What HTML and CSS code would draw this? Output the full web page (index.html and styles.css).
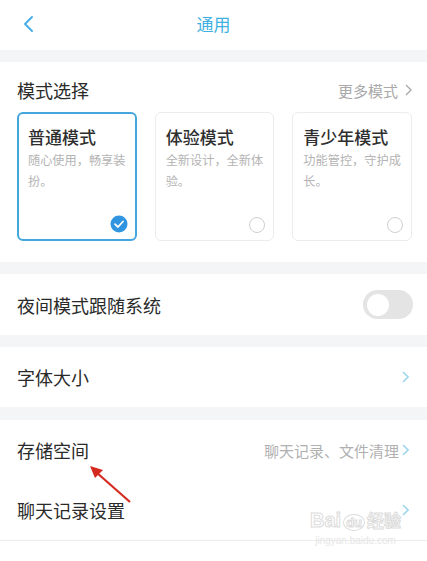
FILE: index.html
```html
<!DOCTYPE html>
<html lang="zh-CN">
<head>
    <meta charset="UTF-8">
    <meta name="viewport" content="width=device-width, initial-scale=1.0">
    <title>通用</title>
    <link rel="stylesheet" href="styles.css">
</head>
<body>

<div class="page">
    <div class="topbar">
        <svg class="back" width="12" height="18" viewBox="0 0 12 18">
            <path d="M10 2 L3 9 L10 16" fill="none" stroke="#4aaee6" stroke-width="2" stroke-linecap="round" stroke-linejoin="round"/>
        </svg>
        <div class="title">通用</div>
    </div>

    <div class="gap"></div>

    <div class="section modes">
        <div class="modes-head">
            <span class="label">模式选择</span>
            <span class="more">更多模式
                <svg width="8" height="12" viewBox="0 0 8 12"><path d="M2 1 L7 6 L2 11" fill="none" stroke="#aaa" stroke-width="1.4"/></svg>
            </span>
        </div>
        <div class="cards">
            <div class="card active">
                <div class="card-title">普通模式</div>
                <div class="card-desc">随心使用，畅享装扮。</div>
                <svg class="mark" width="18" height="18" viewBox="0 0 18 18">
                    <circle cx="9" cy="9" r="8.5" fill="#2f95e0"/>
                    <path d="M5 9.2 L8 12 L13 6.5" fill="none" stroke="#fff" stroke-width="1.8" stroke-linecap="round" stroke-linejoin="round"/>
                </svg>
            </div>
            <div class="card">
                <div class="card-title">体验模式</div>
                <div class="card-desc">全新设计，全新体验。</div>
                <span class="mark ring"></span>
            </div>
            <div class="card">
                <div class="card-title">青少年模式</div>
                <div class="card-desc">功能管控，守护成长。</div>
                <span class="mark ring"></span>
            </div>
        </div>
    </div>

    <div class="gap"></div>

    <div class="section">
        <div class="row">
            <span class="label">夜间模式跟随系统</span>
            <span class="switch"><span class="knob"></span></span>
        </div>
    </div>

    <div class="gap"></div>

    <div class="section">
        <div class="row short">
            <span class="label">字体大小</span>
            <svg class="arrow" width="8" height="12" viewBox="0 0 8 12"><path d="M2 1 L7 6 L2 11" fill="none" stroke="#9fd6ee" stroke-width="1.6"/></svg>
        </div>
    </div>

    <div class="gap wide"></div>

    <div class="section last">
        <div class="row short">
            <span class="label">存储空间</span>
            <span class="hint">聊天记录、文件清理
                <svg width="8" height="12" viewBox="0 0 8 12"><path d="M2 1 L7 6 L2 11" fill="none" stroke="#9fd6ee" stroke-width="1.6"/></svg>
            </span>
        </div>
        <div class="row short">
            <span class="label">聊天记录设置</span>
            <svg class="arrow" width="8" height="12" viewBox="0 0 8 12"><path d="M2 1 L7 6 L2 11" fill="none" stroke="#9fd6ee" stroke-width="1.6"/></svg>
        </div>
    </div>

    <!-- annotation arrow drawn over the screenshot -->
    <svg class="pointer" width="50" height="45" viewBox="0 0 50 45">
        <path d="M44 40 L10 10" stroke="#d42a20" stroke-width="2.2" fill="none"/>
        <path d="M4 4 L17 8 L9 16 Z" fill="#d42a20"/>
    </svg>

    <div class="watermark">
        <div class="wm-top"><span class="wm-bai">Bai</span><span class="wm-du">du</span><span class="wm-jy">经验</span></div>
        <div class="wm-url">jingyan.baidu.com</div>
    </div>
</div>

</body>
</html>
```

FILE: styles.css
```css
body {
    margin: 0;
    background: #fff;
    font-family: "Noto Sans CJK SC", "Noto Sans", sans-serif;
    color: #2e2e2e;
}
.page {
    position: relative;
    width: 427px;
    height: 561px;
    overflow: hidden;
    background: #fff;
}
.topbar {
    height: 50px;
    display: flex;
    align-items: center;
    justify-content: center;
    position: relative;
}
.back {
    position: absolute;
    left: 22px;
    top: 15px;
}
.title {
    font-size: 17px;
    color: #3eb0e2;
    margin-top: -4px;
}
.gap {
    height: 12px;
    background: #f4f5f7;
}
.gap.wide {
    height: 13px;
}
.section {
    background: #fff;
}
.modes {
    padding: 0 15px 21px 17px;
}
.modes-head {
    height: 44px;
    padding-top: 6px;
    display: flex;
    align-items: center;
    justify-content: space-between;
}
.label {
    font-size: 18px;
    color: #2a2a2a;
}
.more {
    font-size: 15px;
    color: #a9a9a9;
    display: flex;
    align-items: center;
    gap: 6px;
}
.cards {
    display: flex;
    gap: 18px;
}
.card {
    position: relative;
    width: 120px;
    height: 129px;
    box-sizing: border-box;
    border: 1px solid #ececec;
    border-radius: 6px;
    padding: 11px 10px 0 10px;
}
.card.active {
    border: 2px solid #45a6de;
    padding: 10px 9px 0 9px;
}
.card-title {
    font-size: 17px;
    line-height: 26px;
    font-weight: 500;
    color: #2e2e2e;
}
.card-desc {
    font-size: 12.2px;
    line-height: 21px;
    color: #b4b4b4;
}
.mark {
    position: absolute;
    right: 8px;
    bottom: 7px;
}
.card.active .mark {
    right: 7px;
    bottom: 6px;
}
.ring {
    width: 14px;
    height: 14px;
    border: 1.5px solid #cfcfcf;
    border-radius: 50%;
}
.row {
    height: 61px;
    display: flex;
    align-items: center;
    justify-content: space-between;
    padding: 0 18px 0 17px;
}
.row.short {
    height: 60px;
}
.section.last {
    border-bottom: 1px solid #ececec;
}
.switch {
    width: 50px;
    height: 29px;
    border-radius: 15px;
    background: #e4e4e4;
    display: flex;
    align-items: center;
    padding-left: 4px;
    box-sizing: border-box;
    margin-right: -4px;
}
.knob {
    width: 22px;
    height: 22px;
    border-radius: 50%;
    background: #fff;
}
.hint {
    font-size: 15px;
    color: #b0b0b0;
    display: flex;
    align-items: center;
    gap: 2px;
}
.pointer {
    position: absolute;
    left: 86px;
    top: 462px;
}
.watermark {
    position: absolute;
    left: 310px;
    top: 510px;
    color: #e2e2e2;
    text-align: center;
}
.wm-top {
    font-family: "Liberation Sans", sans-serif;
    font-size: 20px;
    line-height: 20px;
    font-weight: bold;
    color: #fff;
    -webkit-text-stroke: 1px #dcdcdc;
}
.wm-du {
    font-size: 13px;
    border: 1px solid #dcdcdc;
    border-radius: 50%;
    padding: 0 2px;
    margin: 0 2px;
}
.wm-jy {
    font-family: "Noto Sans CJK SC", sans-serif;
    font-size: 17px;
}
.wm-url {
    font-family: "Liberation Sans", sans-serif;
    font-size: 10px;
    color: #e6e6e6;
    margin-top: 2px;
}
```
